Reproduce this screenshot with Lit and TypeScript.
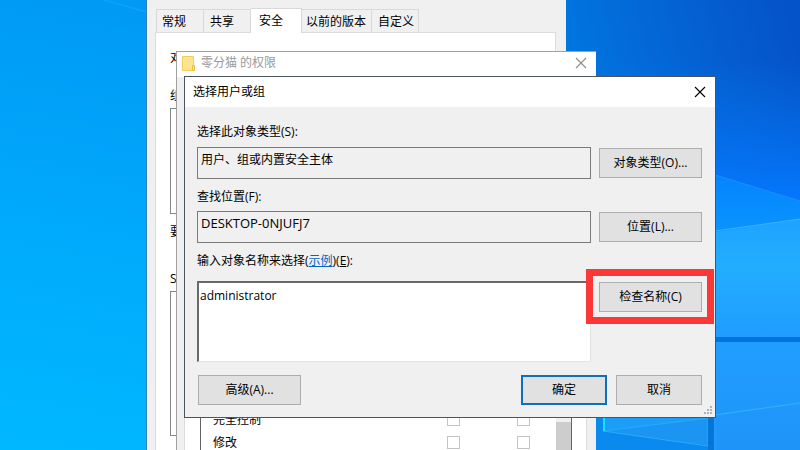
import { LitElement, html, css, svg } from "lit";
import { customElement } from "lit/decorators.js";

const closeIcon = svg`<path d="M1 1L11 11M11 1L1 11" fill="none" stroke="currentColor" stroke-width="1.1" />`;

@customElement("desk-wallpaper")
class DeskWallpaper extends LitElement {
  static styles = css`
    :host { display: block; }
    .art { display: block; width: 100%; height: 100%; }
  `;
  render() {
    return html`<svg class="art" viewBox="0 0 800 450" preserveAspectRatio="none" aria-hidden="true">
      <defs>
        <linearGradient id="left" gradientUnits="userSpaceOnUse" x1="140" y1="0" x2="60" y2="450">
          <stop offset="0" stop-color="#0099f4" /><stop offset=".5" stop-color="#00a9fc" /><stop offset="1" stop-color="#00b8ff" />
        </linearGradient>
        <linearGradient id="right" gradientUnits="userSpaceOnUse" x1="566" y1="80" x2="790" y2="20">
          <stop offset="0" stop-color="#0077e0" /><stop offset=".5" stop-color="#0464d4" /><stop offset="1" stop-color="#0553c8" />
        </linearGradient>
        <linearGradient id="glow" x1="0" y1="0" x2="0" y2="1">
          <stop offset="0" stop-color="#0475f5" stop-opacity="0" /><stop offset="1" stop-color="#0478ff" />
        </linearGradient>
        <linearGradient id="beam" gradientUnits="userSpaceOnUse" x1="0" y1="175" x2="0" y2="232">
          <stop offset="0" stop-color="#0484fd" /><stop offset="1" stop-color="#0a94ff" />
        </linearGradient>
        <linearGradient id="pane" x1="0" y1="0" x2="0" y2="1">
          <stop offset="0" stop-color="#1ea3ff" /><stop offset=".4" stop-color="#22aeff" /><stop offset="1" stop-color="#209cff" />
        </linearGradient>
        <linearGradient id="low" x1="0" y1="0" x2="0" y2="1">
          <stop offset="0" stop-color="#209eff" /><stop offset="1" stop-color="#1f94f8" />
        </linearGradient>
      </defs>
      <rect width="400" height="450" fill="url(#left)" />
      <path d="M104 0L147 12" stroke="#1aa6fa" stroke-width="1.500" opacity=".6" fill="none" />
      <rect x="400" width="400" height="450" fill="url(#right)" />
      <rect x="566" y="60" width="234" height="145" fill="url(#glow)" />
      <path d="M715 175L800 201V450H715Z" fill="url(#beam)" />
      <path d="M715 175L800 201" stroke="#1b90fa" fill="none" />
      <path d="M715 232L800 219V337H715Z" fill="url(#pane)" />
      <path d="M715 231L800 219" stroke="#35b4ff" fill="none" />
      <rect x="715" y="337" width="85" height="5" fill="#0072e2" />
      <rect x="715" y="342" width="85" height="108" fill="url(#low)" />
      <path d="M715 415L800 403" stroke="#31b4fc" fill="none" />
      <rect x="590" y="417" width="125" height="33" fill="#0a8aee" />
      <path d="M603 417H708V445L603 431Z" fill="#1b9df9" />
      <path d="M603 431L708 418V445Z" fill="#1c95f2" />
      <path d="M603 431L708 418M603 431L708 446V417" stroke="#27adfa" fill="none" />
      <path d="M604 417V431" stroke="#1ee0ff" stroke-width="2" fill="none" />
      <rect x="708" y="417" width="6" height="33" fill="#0575d8" />
      <rect x="714" y="417" width="2" height="33" fill="#209aff" />
    </svg>`;
  }
}

@customElement("properties-window")
class PropertiesWindow extends LitElement {
  static styles = css`
    :host { display: flex; flex-direction: column; box-sizing: border-box; padding: 8px 10px 0 8px; border-left: 1px solid #2f7fb8; background: #f0f0f0; }
    .tabs { display: flex; align-items: flex-end; padding-left: 1px; }
    .tab {
      box-sizing: border-box; flex: none; height: 23px; padding: 0 6px; border: 1px solid #d9d9d9; border-left-width: 0; border-bottom: 0;
      background: #f0f0f0; color: #000; font: inherit; line-height: 24px; text-align: left; min-width: 47px; white-space: nowrap;
    }
    .tab.wide { padding: 0 5px 0 4px; }
    .tab.last { padding-right: 4px; }
    .tab.first { border-left-width: 1px; padding-left: 5px; min-width: 48px; }
    .tab.selected { height: 25px; min-width: 51px; background: #fff; margin-bottom: -1px; position: relative; padding: 0 8px; line-height: 22px; }
    .page { flex: 1; box-sizing: border-box; border: 1px solid #dcdcdc; border-bottom: 0; background: #fff; padding: 16px 14px 0; overflow: hidden; }
    .text { line-height: 18px; margin: 0; }
    .gap { margin-top: 20px; }
    .list { box-sizing: border-box; border: 1px solid #828790; height: 106px; margin: 3px 0 9px; }
    .tall { height: 145px; margin-top: 3px; }
    .late { margin-top: 29px; }
  `;
  render() {
    return html`
      <div class="tabs" role="tablist">
        <button class="tab first" role="tab">常规</button>
        <button class="tab" role="tab">共享</button>
        <button class="tab selected" role="tab" aria-selected="true">安全</button>
        <button class="tab wide" role="tab">以前的版本</button>
        <button class="tab last" role="tab">自定义</button>
      </div>
      <div class="page">
        <p class="text">对</p>
        <p class="text gap">组</p>
        <div class="list"></div>
        <p class="text">要</p>
        <p class="text late">S</p>
        <div class="list tall"></div>
      </div>`;
  }
}

@customElement("permissions-window")
class PermissionsWindow extends LitElement {
  static styles = css`
    :host { display: flex; flex-direction: column; box-sizing: border-box; border-top: 1px solid #a0a0a0; border-left: 1px solid #a0a0a0; background: #f0f0f0; overflow: hidden; }
    .title { display: flex; align-items: center; gap: 5px; height: 25px; box-sizing: border-box; padding: 0 9px 3px 4px; background: #fff; color: #999; }
    .folder { flex: none; width: 15px; height: 17px; }
    .name { flex: 1; }
    .close { width: 12px; height: 12px; padding: 0; border: 0; background: none; color: #8c8c8c; }
    .icon { display: block; width: 12px; height: 12px; }
    .page { flex: 1; display: flex; flex-direction: column; justify-content: flex-end; box-sizing: border-box; margin: 0 9px -4px 7px; padding: 0 14px 0 15px; border: 1px solid #dcdcdc; border-width: 0 1px; background: #fff; }
    .list { display: flex; border: 1px solid #646464; border-width: 0 1px; }
    .rows { flex: 1; border-collapse: collapse; }
    .row { height: 23px; }
    .right { padding: 0 0 0 12px; text-align: left; font-weight: normal; }
    .mark { width: 70px; padding: 0; }
    .last { width: 39px; }
    .box { display: block; appearance: none; width: 13px; height: 13px; box-sizing: border-box; margin: 0; border: 1px solid #c4c4c4; background: #fff; }
    .bar { width: 15px; background: #f0f0f0; display: flex; align-items: flex-end; }
    .thumb { width: 15px; height: 32px; background: #cdcdcd; }
  `;
  render() {
    return html`
      <div class="title">
        <svg class="folder" viewBox="0 0 15 17" aria-hidden="true">
          <path d="M1.500 1.500H12.500V10L13.500 11V15.500H1.500Z" fill="#ffe48f" stroke="#f1cd60" />
          <path d="M11.500 15.500V10.500H13.500V15.500Z" fill="#ffeb9f" stroke="#e6bd48" />
        </svg>
        <span class="name">零分猫 的权限</span>
        <button class="close" aria-label="关闭"><svg class="icon" viewBox="0 0 12 12">${closeIcon}</svg></button>
      </div>
      <div class="page">
        <div class="list">
          <table class="rows">
            ${["完全控制", "修改"].map((right) => html`<tr class="row">
              <th class="right" scope="row">${right}</th>
              <td class="mark"><input class="box" type="checkbox" aria-label="${right} 允许" /></td>
              <td class="mark last"><input class="box" type="checkbox" aria-label="${right} 拒绝" /></td>
            </tr>`)}
          </table>
          <div class="bar"><div class="thumb"></div></div>
        </div>
      </div>`;
  }
}

@customElement("select-dialog")
class SelectDialog extends LitElement {
  static styles = css`
    :host { display: block; box-sizing: border-box; border: 1px solid #4b5560; background: #f0f0f0; }
    .title { display: flex; align-items: center; justify-content: space-between; height: 30px; padding: 0 9px 0 8px; background: #fff; }
    .close { width: 12px; height: 12px; padding: 0; border: 0; background: none; color: #000; }
    .icon { display: block; width: 12px; height: 12px; }
    .body { padding: 16px 13px 12px 12px; }
    .row { display: grid; grid-template-columns: minmax(0, 1fr) 103px; column-gap: 8px; align-items: center; margin: 6px 0 9px; }
    .place { margin-top: 5px; }
    .label { display: block; line-height: 18px; }
    .link { color: #0066cc; }
    .field {
      display: block; box-sizing: border-box; width: 100%; height: 32px; margin: 0; padding: 0 3px 8px; border: 1px solid #7a7a7a;
      border-radius: 0; background: #f0f0f0; color: #000; font: inherit; outline: 0;
    }
    .machine { font-size: 13px; }
    .names { align-items: start; margin: 11px 0 13px; }
    .area {
      display: block; box-sizing: border-box; width: 100%; height: 81px; padding: 4px 1px; border: solid; border-width: 2px 1px 1px 2px;
      border-color: #696969 #e3e3e3 #e3e3e3 #696969; border-radius: 0; background: #fff; color: #000; font: inherit; line-height: 18px; resize: none; outline: 0;
    }
    .button { box-sizing: border-box; height: 30px; padding: 0; border: 1px solid #adadad; background: #e1e1e1; color: #000; font: inherit; }
    .marked { position: relative; display: grid; margin-top: 1px; }
    .marked::after { content: ""; position: absolute; inset: -13px -12px -12px -13px; border: 7px solid #fb3838; pointer-events: none; }
    .actions { display: flex; gap: 9px; padding-left: 1px; }
    .advanced { width: 103px; margin-right: auto; }
    .choice { width: 86px; }
    .default { border: 2px solid #0f6fb8; }
    .grip { position: absolute; right: 3px; bottom: 2px; width: 9px; height: 9px; }
  `;
  render() {
    return html`
      <div class="title">
        <span>选择用户或组</span>
        <button class="close" aria-label="关闭"><svg class="icon" viewBox="0 0 12 12">${closeIcon}</svg></button>
      </div>
      <div class="body">
        <label class="label" for="type">选择此对象类型(S):</label>
        <div class="row">
          <input class="field" id="type" readonly value="用户、组或内置安全主体" />
          <button class="button">对象类型(O)...</button>
        </div>
        <label class="label" for="place">查找位置(F):</label>
        <div class="row place">
          <input class="field machine" id="place" readonly value="DESKTOP-0NJUFJ7" />
          <button class="button">位置(L)...</button>
        </div>
        <label class="label" for="names">输入对象名称来选择(<a class="link" href="#examples">示例</a>)(<u>E</u>):</label>
        <div class="row names">
          <textarea class="area" id="names" spellcheck="false" .value=${"administrator"}></textarea>
          <div class="marked"><button class="button">检查名称(C)</button></div>
        </div>
        <div class="actions">
          <button class="button advanced">高级(A)...</button>
          <button class="button choice default">确定</button>
          <button class="button choice">取消</button>
        </div>
      </div>
      <svg class="grip" viewBox="0 0 9 9" fill="#b4b4b4" aria-hidden="true">
        <path d="M7 0h2v2h-2zM7 3h2v2h-2zM7 6h2v2h-2zM4 3h2v2h-2zM4 6h2v2h-2zM1 6h2v2h-2z" />
      </svg>`;
  }
}

@customElement("app-root")
class AppRoot extends LitElement {
  static styles = css`
    :host { display: block; position: relative; height: 100vh; overflow: hidden; color: #000; font: 12px/18px "Open Sans", "Noto Sans CJK SC", sans-serif; }
    .wallpaper { height: 100%; }
    .properties { position: absolute; left: 146px; right: 234px; top: 0; bottom: 0; }
    .permissions { position: absolute; left: 176px; right: 204px; top: 51px; bottom: 0; }
    .select { position: absolute; left: 184px; right: 84px; top: 76px; }
  `;
  render() {
    return html`
      <desk-wallpaper class="wallpaper"></desk-wallpaper>
      <properties-window class="properties"></properties-window>
      <permissions-window class="permissions"></permissions-window>
      <select-dialog class="select"></select-dialog>`;
  }
}
